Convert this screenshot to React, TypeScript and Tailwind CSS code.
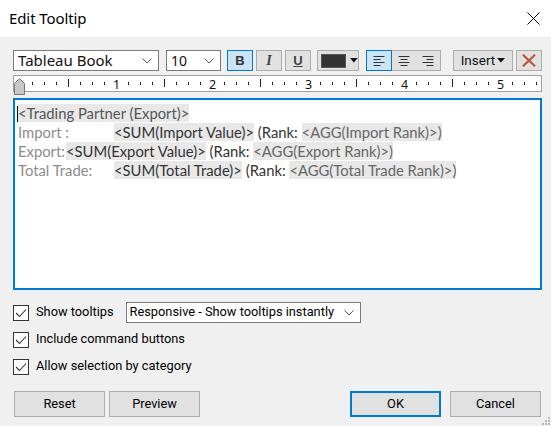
import React from "react";

const UI = { fontFamily: 'Roboto, "Noto Sans", sans-serif' };
const TITLE = { fontFamily: '"Noto Sans", sans-serif' };
const ED = { fontFamily: 'Lato, "Noto Sans", sans-serif' };

function Chevron() {
  return (
    <svg width="10" height="6" viewBox="0 0 10 6" className="shrink-0">
      <path d="M0.5 0.5 L5 5 L9.5 0.5" fill="none" stroke="#555" strokeWidth="1" />
    </svg>
  );
}

function AlignIcon({ kind }: { kind: "left" | "center" | "right" }) {
  const rows = [
    { y: 1.5, long: true },
    { y: 4.5, long: false },
    { y: 7.5, long: true },
    { y: 10.5, long: false },
  ];
  return (
    <svg width="12" height="12" viewBox="0 0 12 12">
      {rows.map((r, i) => {
        const w = r.long ? 11 : 7;
        let x1 = 0.5;
        if (kind === "center") x1 = (12 - w) / 2;
        if (kind === "right") x1 = 11.5 - w;
        return <line key={i} x1={x1} x2={x1 + w} y1={r.y} y2={r.y} stroke="#333" strokeWidth="1" />;
      })}
    </svg>
  );
}

function Ruler() {
  const ticks: React.ReactNode[] = [];
  const zero = 6.5;
  for (let k = 1; k < 44; k++) {
    const x = zero + k * 12;
    if (x > 526) break;
    if (k % 8 === 0) {
      ticks.push(
        <text key={"n" + k} x={x} y={13} textAnchor="middle" fontSize="12.5" fill="#111" fontFamily='"Noto Sans", sans-serif'>
          {k / 8}
        </text>
      );
    } else if (k % 4 === 0) {
      ticks.push(<line key={k} x1={x} x2={x} y1={3} y2={11} stroke="#222" strokeWidth="1" />);
    } else {
      ticks.push(<line key={k} x1={x} x2={x} y1={6} y2={9} stroke="#222" strokeWidth="1" />);
    }
  }
  return (
    <div className="relative mx-[13px] mt-[4px] h-[17px] w-[529px] border border-[#a0a0a0] bg-white">
      <svg width="527" height="15" className="absolute left-0 top-0 overflow-visible">
        {ticks}
      </svg>
      <svg width="12" height="18" viewBox="0 0 12 18" className="absolute left-[-0.5px] top-[2px]">
        <path d="M5.5 0.5 L10.5 5.5 L10.5 16.5 L0.5 16.5 L0.5 5.5 Z" fill="#c8c8c8" stroke="#7a7a7a" strokeWidth="1" />
      </svg>
    </div>
  );
}

function Check() {
  return (
    <div className="flex h-[16px] w-[16px] shrink-0 items-center justify-center border border-[#333] bg-white">
      <svg width="12" height="10" viewBox="0 0 12 10">
        <path d="M1 5 L4.5 8.5 L11 1.5" fill="none" stroke="#333" strokeWidth="1.1" />
      </svg>
    </div>
  );
}

export default function App() {
  return (
    <div className="relative h-[426px] w-[551px] overflow-hidden bg-[#f0f0f0] text-[#000]" style={UI}>
      {/* Title bar */}
      <div className="flex h-[37px] items-center justify-between bg-white pl-[9px] pr-[11px]">
        <span className="text-[15px] leading-none tracking-[-0.1px] text-[#000]" style={TITLE}>Edit Tooltip</span>
        <svg width="13" height="13" viewBox="0 0 13 13">
          <path d="M0.5 0.5 L12.5 12.5 M12.5 0.5 L0.5 12.5" stroke="#000" strokeWidth="1" />
        </svg>
      </div>

      {/* Toolbar */}
      <div className="mt-[13px] flex h-[21px] pl-[13px]">
        <div className="flex h-[21px] w-[146px] items-center justify-between border border-[#7a7a7a] bg-white pl-[4px] pr-[6px]">
          <span className="text-[15px] leading-none text-[#111]" style={TITLE}>Tableau Book</span>
          <Chevron />
        </div>
        <div className="ml-[7px] flex h-[21px] w-[55px] items-center justify-between border border-[#7a7a7a] bg-white pl-[4px] pr-[6px]">
          <span className="text-[14px] leading-none text-[#111]" style={TITLE}>10</span>
          <Chevron />
        </div>
        <div className="ml-[6px] flex h-[21px] w-[26px] items-center justify-center border border-[#0078d7] bg-[#cce4f7]">
          <span className="text-[13px] font-bold leading-none text-[#333]" style={{ fontFamily: '"Liberation Sans", sans-serif' }}>B</span>
        </div>
        <div className="ml-[3px] flex h-[21px] w-[26px] items-center justify-center border border-[#adadad] bg-[#e1e1e1]">
          <span className="text-[14px] font-bold italic leading-none text-[#444]" style={{ fontFamily: '"Liberation Serif", serif' }}>I</span>
        </div>
        <div className="ml-[3px] flex h-[21px] w-[26px] items-center justify-center border border-[#adadad] bg-[#e1e1e1]">
          <span className="text-[13px] font-bold leading-none text-[#444] underline" style={{ fontFamily: '"Liberation Sans", sans-serif' }}>U</span>
        </div>
        <div className="ml-[6px] flex h-[21px] w-[42px] items-center border border-[#adadad] bg-[#e1e1e1] pl-[3px]">
          <div className="h-[14px] w-[26px] border border-[#555] bg-[#333]" />
          <svg width="8" height="5" viewBox="0 0 8 5" className="ml-[4px]">
            <path d="M0 0 L8 0 L4 4.5 Z" fill="#111" />
          </svg>
        </div>
        <div className="ml-[7px] flex h-[21px] w-[75px] border border-[#adadad] bg-[#e1e1e1]">
          <div className="-m-px flex h-[21px] w-[26px] items-center justify-center border border-[#0078d7] bg-[#cce4f7]">
            <AlignIcon kind="left" />
          </div>
          <div className="flex h-[19px] w-[25px] items-center justify-center">
            <AlignIcon kind="center" />
          </div>
          <div className="flex h-[19px] w-[24px] items-center justify-center">
            <AlignIcon kind="right" />
          </div>
        </div>
        <div className="ml-[12px] flex h-[21px] w-[60px] items-center justify-center gap-[2px] border border-[#adadad] bg-[#e1e1e1]">
          <span className="text-[13.5px] leading-none text-[#111]">Insert</span>
          <svg width="8" height="5" viewBox="0 0 8 5">
            <path d="M0 0 L8 0 L4 4.5 Z" fill="#111" />
          </svg>
        </div>
        <div className="ml-[3px] flex h-[21px] w-[26px] items-center justify-center border border-[#adadad] bg-[#e1e1e1]">
          <svg width="14" height="13" viewBox="0 0 14 13">
            <path d="M1 0.8 L13 12.2 M13 0.8 L1 12.2" stroke="#b9553c" strokeWidth="2.2" />
          </svg>
        </div>
      </div>

      <Ruler />

      {/* Editor */}
      <div className="mx-[13px] mt-[6px] h-[192px] w-[529px] border-2 border-[#0078d7] bg-white pl-[3px] pt-[4px] text-[14.8px] leading-[19px]" style={ED}>
        <div className="relative">
          <span className="absolute left-[-1px] top-[2px] h-[16px] w-px bg-[#000]" />
          <span className="bg-[#e8e8e8] text-[#555]">&lt;Trading Partner (Export)&gt;</span>
        </div>
        <div className="whitespace-nowrap">
          <span className="inline-block w-[96px] text-[#8c8c8c]">Import :</span>
          <span className="bg-[#e8e8e8] text-[#333]">&lt;SUM(Import Value)&gt;</span>
          <span className="text-[#333]"> (Rank: </span>
          <span className="bg-[#e8e8e8] text-[#666]">&lt;AGG(Import Rank)&gt;)</span>
        </div>
        <div className="whitespace-nowrap">
          <span className="inline-block w-[48px] text-[#8c8c8c]">Export:</span>
          <span className="bg-[#e8e8e8] text-[#333]">&lt;SUM(Export Value)&gt;</span>
          <span className="text-[#333]"> (Rank:  </span>
          <span className="bg-[#e8e8e8] text-[#666]">&lt;AGG(Export Rank)&gt;)</span>
        </div>
        <div className="whitespace-nowrap">
          <span className="inline-block w-[96px] text-[#8c8c8c]">Total Trade:</span>
          <span className="bg-[#e8e8e8] text-[#333]">&lt;SUM(Total Trade)&gt;</span>
          <span className="text-[#333]"> (Rank: </span>
          <span className="bg-[#e8e8e8] text-[#666]">&lt;AGG(Total Trade Rank)&gt;)</span>
        </div>
      </div>

      {/* Options */}
      <div className="mt-[12px] flex h-[21px] items-center pl-[13px]">
        <Check />
        <span className="ml-[7px] whitespace-nowrap text-[12.8px] leading-none">Show tooltips</span>
        <div className="ml-[12px] flex h-[21px] w-[235px] items-center justify-between border border-[#7a7a7a] bg-white pl-[3px] pr-[6px]">
          <span className="whitespace-nowrap text-[12.8px] leading-none">Responsive - Show tooltips instantly</span>
          <Chevron />
        </div>
      </div>
      <div className="mt-[6px] flex h-[21px] items-center pl-[13px]">
        <Check />
        <span className="ml-[7px] whitespace-nowrap text-[12.8px] leading-none">Include command buttons</span>
      </div>
      <div className="mt-[6px] flex h-[21px] items-center pl-[13px]">
        <Check />
        <span className="ml-[7px] whitespace-nowrap text-[12.8px] leading-none">Allow selection by category</span>
      </div>

      {/* Buttons */}
      <div className="mt-[14px] flex h-[26px] pl-[14px] pr-[10px]">
        <button className="flex h-[26px] w-[91px] items-center justify-center border border-[#adadad] bg-[#e1e1e1] text-[12.8px]">Reset</button>
        <button className="ml-[4px] flex h-[26px] w-[91px] items-center justify-center border border-[#adadad] bg-[#e1e1e1] text-[12.8px]">Preview</button>
        <div className="flex-1" />
        <button className="flex h-[26px] w-[91px] items-center justify-center border-2 border-[#0078d7] bg-[#e1e1e1] text-[12.8px]">OK</button>
        <button className="ml-[9px] flex h-[26px] w-[91px] items-center justify-center border border-[#adadad] bg-[#e1e1e1] text-[12.8px]">Cancel</button>
      </div>

      {/* size grip */}
      <svg width="10" height="10" viewBox="0 0 10 10" className="absolute bottom-0 right-0">
        <rect x="7" y="1" width="2" height="2" fill="#b8b8b8" />
        <rect x="4" y="4" width="2" height="2" fill="#b8b8b8" />
        <rect x="7" y="4" width="2" height="2" fill="#b8b8b8" />
        <rect x="1" y="7" width="2" height="2" fill="#b8b8b8" />
        <rect x="4" y="7" width="2" height="2" fill="#b8b8b8" />
        <rect x="7" y="7" width="2" height="2" fill="#b8b8b8" />
      </svg>
    </div>
  );
}
